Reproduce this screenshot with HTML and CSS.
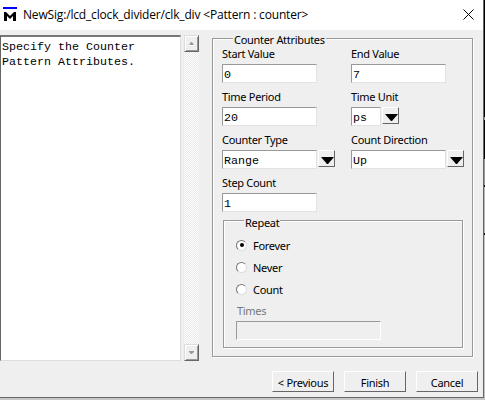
FILE: index.html
```html
<!DOCTYPE html>
<html lang="en">
<head>
<meta charset="utf-8">
<title>NewSig</title>
<link rel="stylesheet" href="styles.css">
</head>
<body>
<div class="desktop">
<div class="window">
  <header class="titlebar">
    <svg class="logo" width="14" height="15" viewBox="0 0 14 15"><path fill="#00f" d="M0 0h14v2H0z"/><path d="M1 14V5h2l4 4 4-4h2v9h-3V9l-3 3-3-3v5z"/></svg>
    <span class="title">NewSig:/lcd_clock_divider/clk_div &lt;Pattern : counter&gt;</span>
    <svg class="close" width="11" height="11" viewBox="0 0 11 11"><path d="M.5.5l10 10M10.5.5l-10 10" stroke="#000" fill="none"/></svg>
  </header>
  <main class="content">
    <div class="notes">Specify the Counter<br>Pattern Attributes.</div>
    <div class="scrollbar">
      <div class="scroll-btn"><svg width="6" height="4" viewBox="0 0 6 4"><path fill="#999" d="M0 3L2 0h1l2 3z"/><path fill="#fff" d="M0 3h6v1H0z"/></svg></div>
      <div class="scroll-btn"><svg width="6" height="4" viewBox="0 0 6 4"><path fill="#fff" d="M5 1h1L3 4z"/><path fill="#999" d="M0 0h5v1L3 3H2L0 1z"/></svg></div>
    </div>
    <section class="group attributes">
      <div class="legend"><span>Counter Attributes</span></div>
      <div class="fields">
        <div class="field"><label>Start Value</label><div class="row"><div class="input">0</div></div></div>
        <div class="field"><label>End Value</label><div class="row"><div class="input">7</div></div></div>
        <div class="field"><label>Time Period</label><div class="row"><div class="input">20</div></div></div>
        <div class="field"><label>Time Unit</label><div class="row"><div class="input short">ps</div><div class="drop"><svg width="13" height="7" viewBox="0 0 13 7"><path d="M0 0h13L7 7H6z"/></svg></div></div></div>
        <div class="field"><label>Counter Type</label><div class="row"><div class="input">Range</div><div class="drop"><svg width="13" height="7" viewBox="0 0 13 7"><path d="M0 0h13L7 7H6z"/></svg></div></div></div>
        <div class="field"><label>Count Direction</label><div class="row"><div class="input">Up</div><div class="drop"><svg width="13" height="7" viewBox="0 0 13 7"><path d="M0 0h13L7 7H6z"/></svg></div></div></div>
        <div class="field"><label>Step Count</label><div class="row"><div class="input">1</div></div></div>
      </div>
      <section class="group repeat">
        <div class="legend"><span>Repeat</span></div>
        <div class="option"><i class="radio on"></i><span>Forever</span></div>
        <div class="option"><i class="radio"></i><span>Never</span></div>
        <div class="option"><i class="radio"></i><span>Count</span></div>
        <div class="times">Times</div>
        <div class="times-input"></div>
      </section>
    </section>
  </main>
  <footer class="actions">
    <div class="button">&lt; Previous</div>
    <div class="button">Finish</div>
    <div class="button">Cancel</div>
  </footer>
</div>
</div>
</body>
</html>
```
FILE: styles.css
```css
* { box-sizing: border-box; }
body { margin: 0; font: 11px/14px "Noto Sans", sans-serif; letter-spacing: -0.3px; color: #000; }
.desktop { width: 485px; height: 400px; overflow: hidden; background: linear-gradient(#000 0 117px, #999 117px 120px, #000 120px 159px, #999 159px 185px, #111 185px 187px, #b5b5b5 187px 233px, #111 233px 235px, #c4c4c4 235px); }
.window { width: 484px; height: 398px; background: #efefef; border-right: 1px solid #666; border-bottom: 1px solid #666; box-shadow: 0 2px #c8c8c8; }
.titlebar { height: 30px; background: #fff; display: flex; padding-left: 3px; }
.logo { margin-top: 7px; }
.title { margin: 6px 0 0 6px; width: 430px; font: 12px/17px "Open Sans", sans-serif; letter-spacing: -0.17px; white-space: nowrap; }
.close { margin: 9px 0 0 10px; }
.content { display: flex; height: 332px; padding-top: 5px; }
.notes { width: 181px; height: 326px; background: #fff; border: 1px solid #ddd; border-left-color: #666; border-top: 2px solid #777; padding: 3px 0 0 1px; font: 11.67px/15px "Liberation Mono", monospace; letter-spacing: 0; }
.scrollbar { margin-left: 3px; width: 15px; height: 326px; background: repeating-conic-gradient(#fff 0 25%, #e9e9e9 0 50%) 0 0 / 2px 2px; display: flex; flex-direction: column; justify-content: space-between; }
.scroll-btn { height: 17px; background: #efefef; border: 1px solid; border-color: #ddd #666 #666 #ddd; box-shadow: inset 1px 1px #fff, inset -1px -1px #999; display: flex; align-items: center; justify-content: center; }
.group { border: 1px solid #999; box-shadow: 1px 1px #fff, inset 1px 1px #fff; }
.attributes { margin: 3px 0 0 13px; width: 261px; height: 319px; padding-left: 9px; }
.legend { height: 14px; margin: -6px 0 0 11px; display: flex; }
.legend span { background: #efefef; padding: 0 1px; height: 14px; }
.fields { height: 173px; display: grid; grid-template-columns: 129px 120px; grid-auto-rows: 43px; }
.field label { display: block; height: 17px; line-height: 14px; white-space: nowrap; }
.row { display: flex; }
.input { width: 95px; height: 19px; background: #fff; border: 1px solid #e2e2e2; border-top-color: #999; border-left-color: #999; font: 11.67px/20px "Liberation Mono", monospace; letter-spacing: 0; padding-left: 1px; }
.input.short { width: 30px; }
.drop { width: 17px; height: 17px; margin-left: 1px; border: 1px solid; border-color: #fff #666 #666 #fff; display: flex; align-items: center; justify-content: flex-end; padding-top: 3px; }
.repeat { margin-left: 1px; width: 240px; height: 128px; padding-left: 12px; }
.repeat .legend { margin: -5px 0 0 8px; }
.option { height: 22px; display: flex; align-items: center; gap: 6px; }
.option span { margin-top: 2px; }
.repeat .legend + .option { margin-top: 4px; }
.radio { width: 11px; height: 11px; border-radius: 50%; background: #fff; border: 1.5px solid; border-color: #777 #ddd #ddd #777; display: flex; align-items: center; justify-content: center; }
.radio.on::after { content: ""; width: 4px; height: 4px; border-radius: 50%; background: #000; }
.times { color: #777; padding-left: 1px; margin-top: 4px; height: 17px; }
.times-input { width: 145px; height: 19px; border: 1px solid #fff; border-top-color: #999; border-left-color: #999; }
.actions { display: flex; gap: 10px; margin: 9px 0 0 272px; }
.button { width: 62px; height: 21px; border: 1px solid; border-color: #fff #666 #666 #fff; text-align: center; line-height: 21px; }
```
